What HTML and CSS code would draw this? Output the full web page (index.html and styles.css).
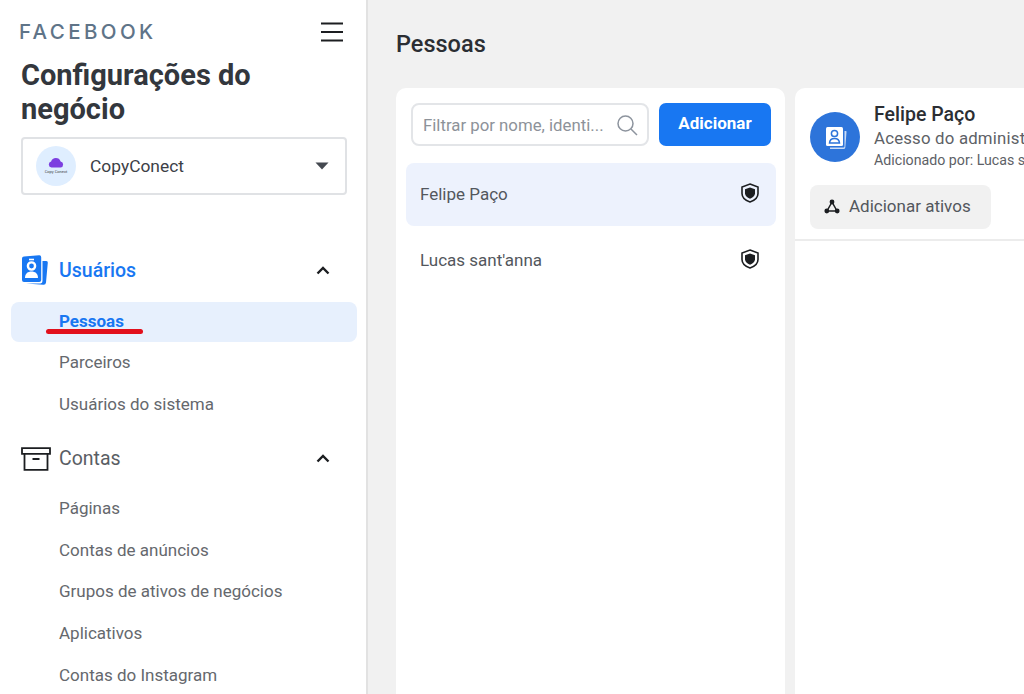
FILE: index.html
```html
<!DOCTYPE html>
<html lang="pt">
<head>
<meta charset="utf-8">
<title>Configurações do negócio</title>
<link rel="stylesheet" href="styles.css">
</head>
<body>
<div class="app">
  <aside class="sidebar">
    <div class="brand-row">
      <span class="brand">FACEBOOK</span>
      <svg class="burger" width="22" height="20" viewBox="0 0 22 20"><path d="M0 1.500h22M0 10h22M0 18.500h22" stroke="#1c1e21" stroke-width="2.200" fill="none"/></svg>
    </div>
    <h1 class="title">Configurações do negócio</h1>
    <div class="account">
      <span class="avatar">
        <svg width="16" height="10" viewBox="0 0 16 10"><path d="M3.500 9.500a3 3 0 0 1-.4-5.900A5 5 0 0 1 12.600 3.400a3.100 3.100 0 0 1 0 6.100z" fill="#7c3fe0"/></svg>
        <span class="avatar-text">Copy Conect</span>
      </span>
      <span class="account-name">CopyConect</span>
      <svg class="caret" width="14" height="8" viewBox="0 0 14 8"><path d="M0.500 0.500h13L7 7.500z" fill="#444950"/></svg>
    </div>

    <nav class="nav">
      <div class="section section-active">
        <svg class="section-icon" width="28" height="30" viewBox="0 0 28 30"><path d="M21.500 6h3.800a1.500 1.500 0 0 1 1.500 1.700L25 27.500a2.500 2.500 0 0 1-2.700 2.200L5 28.500h14.500a2.500 2.500 0 0 0 2-2.500z" fill="#1877f2"/><path d="M3 1.500 18 .2a2 2 0 0 1 2.200 2V25a2 2 0 0 1-2 2L3 27a2 2 0 0 1-2-2V3.500a2 2 0 0 1 2-2z" fill="#1877f2"/><circle cx="10.500" cy="11" r="3.600" fill="none" stroke="#fff" stroke-width="2.400"/><path d="M4 23c0-4.500 3-6.500 6.500-6.500S17 18.500 17 23z" fill="#fff"/><path d="M8 4.500h5" stroke="#fff" stroke-width="1.600"/></svg>
        <span class="section-label">Usuários</span>
        <svg class="chevron" width="14" height="9" viewBox="0 0 14 9"><path d="M1.500 7.500 7 2l5.500 5.500" fill="none" stroke="#1c1e21" stroke-width="2.400"/></svg>
      </div>
      <div class="item item-active">Pessoas<span class="red-mark"></span></div>
      <div class="item">Parceiros</div>
      <div class="item">Usuários do sistema</div>

      <div class="section section-second">
        <svg class="section-icon" width="30" height="24" viewBox="0 0 30 24"><path d="M1 1.200h28v5.600H1zM3.500 7v15.800h23V7M11.500 12h7" fill="none" stroke="#1c1e21" stroke-width="1.800"/></svg>
        <span class="section-label">Contas</span>
        <svg class="chevron" width="14" height="9" viewBox="0 0 14 9"><path d="M1.500 7.500 7 2l5.500 5.500" fill="none" stroke="#1c1e21" stroke-width="2.400"/></svg>
      </div>
      <div class="item item-first">Páginas</div>
      <div class="item">Contas de anúncios</div>
      <div class="item">Grupos de ativos de negócios</div>
      <div class="item">Aplicativos</div>
      <div class="item">Contas do Instagram</div>
    </nav>
  </aside>

  <main class="main">
    <h2 class="page-title">Pessoas</h2>
    <div class="columns">
      <section class="panel list-panel">
        <div class="toolbar">
          <div class="search">
            <span class="search-text">Filtrar por nome, identi...</span>
            <svg width="22" height="22" viewBox="0 0 22 22"><circle cx="9.500" cy="9.500" r="7.500" fill="none" stroke="#8d949e" stroke-width="1.500"/><path d="m15 15 6 6" stroke="#8d949e" stroke-width="1.500"/></svg>
          </div>
          <button class="add-btn">Adicionar</button>
        </div>
        <div class="person person-active">
          <span>Felipe Paço</span>
          <svg class="shield" width="18" height="20" viewBox="0 0 18 20"><path d="M9 1 17 4v6.500c0 4-3.500 7-8 8.500-4.500-1.500-8-4.500-8-8.500V4z" fill="none" stroke="#1c1e21" stroke-width="1.600"/><path d="M9 4.500 14 6.300v4c0 2.500-2.200 4.400-5 5.400-2.800-1-5-2.900-5-5.400v-4z" fill="#1c1e21"/></svg>
        </div>
        <div class="person">
          <span>Lucas sant'anna</span>
          <svg class="shield" width="18" height="20" viewBox="0 0 18 20"><path d="M9 1 17 4v6.500c0 4-3.500 7-8 8.500-4.500-1.500-8-4.500-8-8.500V4z" fill="none" stroke="#1c1e21" stroke-width="1.600"/><path d="M9 4.500 14 6.300v4c0 2.500-2.200 4.400-5 5.400-2.800-1-5-2.900-5-5.400v-4z" fill="#1c1e21"/></svg>
        </div>
      </section>

      <section class="detail">
        <div class="detail-head">
          <div class="profile">
            <span class="profile-icon">
              <svg width="26" height="26" viewBox="0 0 26 26"><rect x="4" y="3" width="17" height="19" rx="1.500" fill="#fff"/><circle cx="12.500" cy="9.500" r="3.100" fill="none" stroke="#2d74da" stroke-width="1.500"/><path d="M7.500 19c.2-3.400 2.200-4.600 5-4.600s4.800 1.200 5 4.600z" fill="none" stroke="#2d74da" stroke-width="1.500"/><path d="M22.500 7h1.200a.8.800 0 0 1 .8 1L23.300 23.500a1.800 1.800 0 0 1-1.800 1.500H8v-1.500h13.500a1 1 0 0 0 1-1z" fill="#fff" opacity=".75"/></svg>
            </span>
            <div class="profile-text">
              <div class="profile-name">Felipe Paço</div>
              <div class="profile-role">Acesso do administrador</div>
              <div class="profile-by">Adicionado por: Lucas sant'anna</div>
            </div>
          </div>
          <button class="assets-btn">
            <svg width="16" height="15" viewBox="0 0 16 15"><path d="M8 3 3 12h10z" fill="none" stroke="#1c1e21" stroke-width="1.500"/><circle cx="8" cy="3" r="2.400" fill="#1c1e21"/><circle cx="2.800" cy="12" r="2.400" fill="#1c1e21"/><circle cx="13.200" cy="12" r="2.400" fill="#1c1e21"/></svg>
            <span>Adicionar ativos</span>
          </button>
        </div>
        <div class="detail-body"></div>
      </section>
    </div>
  </main>
</div>
</body>
</html>
```
FILE: styles.css
```css
* { box-sizing: border-box; }
html, body { margin: 0; height: 100%; overflow: hidden; }
body { font-family: Roboto, "Liberation Sans", sans-serif; color: #1c1e21; background: #f1f1f1; }
.app { display: flex; width: 1024px; height: 694px; overflow: hidden; }

.sidebar { flex: 0 0 368px; height: 694px; background: #fff; border-right: 2px solid #e2e2e2; padding: 20px 11px 0; overflow: hidden; }
.brand-row { display: flex; justify-content: space-between; align-items: center; padding: 0 12px 0 8px; height: 24px; }
.brand { font-family: Inter, "Liberation Sans", sans-serif; font-weight: 500; font-size: 20.500px; letter-spacing: 3.400px; color: #5f7488; line-height: 24px; }
.burger { display: block; }
.title { margin: 14px 0 11px 10px; width: 300px; font-size: 29px; line-height: 34px; font-weight: 700; color: #33373d; }
.account { display: flex; align-items: center; margin-left: 10px; width: 326px; height: 58px; border: 2px solid #e0e2e5; border-radius: 4px; padding: 0 16px 0 13px; }
.avatar { width: 40px; height: 40px; border-radius: 50%; background: #dfeeff; display: flex; flex-direction: column; align-items: center; justify-content: center; gap: 1px; flex: none; }
.avatar-text { font-size: 4px; line-height: 5px; color: #444; white-space: nowrap; }
.account-name { flex: 1; margin-left: 14px; font-size: 17.400px; color: #3c4046; }
.caret { display: block; }

.nav { margin-top: 55px; }
.section { display: flex; align-items: center; height: 40px; padding: 0 25px 0 10px; }
.section-icon { flex: none; display: block; }
.section-label { flex: 1; margin-left: 10px; font-size: 19.500px; color: #5a5e64; }
.section-active .section-label { color: #1877f2; font-weight: 500; }
.section-active { margin-bottom: 12px; }
.section-second { margin-top: 15px; }
.section-second .section-label { margin-left: 8px; }
.chevron { display: block; }
.item { position: relative; display: flex; align-items: center; width: 346px; height: 40px; margin-bottom: 1.800px; padding-left: 48px; border-radius: 8px; font-size: 17px; color: #65686d; }
.item-active { margin-bottom: 0; padding-bottom: 2px; background: #e7f0fd; color: #1877f2; font-weight: 700; }
.item-first { margin-top: 9px; }
.red-mark { position: absolute; left: 35px; top: 27px; width: 97px; height: 5px; border-radius: 3px; background: #e2101c; }

.main { flex: 1; min-width: 0; padding: 0 0 0 28px; }
.page-title { margin: 0; height: 88px; line-height: 88px; font-size: 23.500px; font-weight: 500; color: #2b2e33; }
.columns { display: flex; gap: 10px; height: 606px; }
.panel, .detail { background: #fff; border-radius: 10px 10px 0 0; }
.list-panel { flex: 0 0 389px; padding: 15px 9px 0 10px; }
.toolbar { display: flex; gap: 10px; padding: 0 5px; margin-bottom: 17px; }
.search { flex: 0 0 238px; height: 43px; display: flex; align-items: center; justify-content: space-between; border: 2px solid #e3e5e8; border-radius: 8px; padding: 0 9px 0 10px; }
.search-text { font-size: 16.800px; color: #8d9299; white-space: nowrap; }
.add-btn { flex: 0 0 112px; height: 43px; padding: 0 0 3px; border: 0; border-radius: 7px; background: #1877f2; color: #fff; font: 700 17px Roboto, sans-serif; }
.person { display: flex; align-items: center; justify-content: space-between; height: 63px; margin-bottom: 2px; padding: 0 17px 0 14px; border-radius: 8px; font-size: 17px; color: #53575d; }
.person-active { padding-bottom: 2px; background: #edf2fd; }
.shield { margin-bottom: 2px; }

.detail { flex: 1; min-width: 300px; display: flex; flex-direction: column; margin-right: -100px; }
.detail-head { height: 153px; padding: 15px 15px; border-bottom: 2px solid #ececec; }
.profile { display: flex; align-items: center; gap: 14px; }
.profile-icon { flex: none; width: 50px; height: 50px; border-radius: 50%; background: #2d74da; display: flex; align-items: center; justify-content: center; }
.profile-text { white-space: nowrap; }
.profile-name { font-size: 19.500px; line-height: 23px; font-weight: 500; color: #2b2e33; }
.profile-role { font-size: 16.800px; line-height: 24px; color: #5d6166; letter-spacing: 0.200px; }
.profile-by { font-size: 14.200px; line-height: 20px; color: #5d6166; }
.assets-btn { display: flex; align-items: center; gap: 9px; margin-top: 15px; width: 181px; height: 44px; padding: 0 14px 2px; border: 0; border-radius: 8px; background: #f1f1f1; color: #53575d; font: 17px Roboto, sans-serif; }
.detail-body { flex: 1; }
```
